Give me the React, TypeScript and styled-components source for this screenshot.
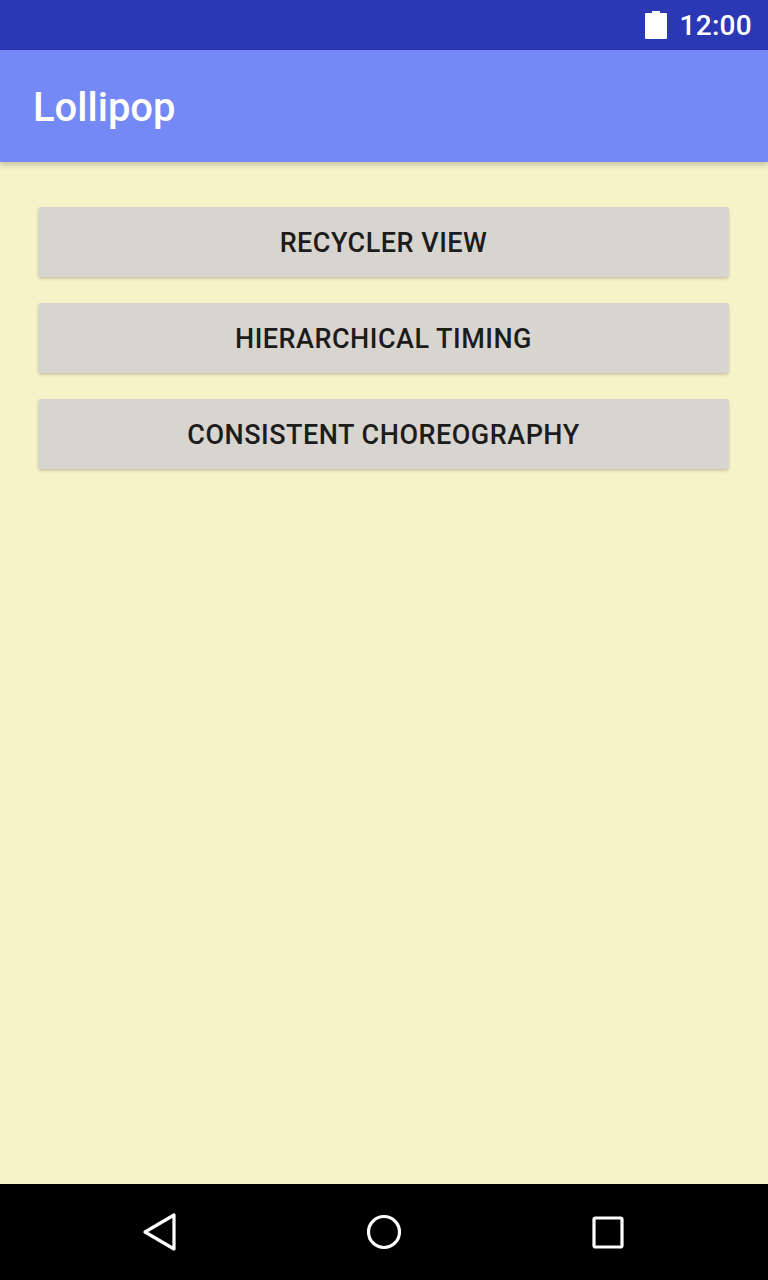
import styled, { createGlobalStyle } from 'styled-components';

const GlobalStyle = createGlobalStyle`
  html, body {
    margin: 0;
    padding: 0;
    background: #f7f3c9;
    font-family: Roboto, "Noto Sans", "Liberation Sans", sans-serif;
  }
`;

const Screen = styled.div`
  width: 768px;
  height: 1280px;
  display: flex;
  flex-direction: column;
  background: #f7f3c9;
`;

const StatusBar = styled.div`
  height: 50px;
  background: #2b38b4;
  display: flex;
  align-items: center;
  justify-content: flex-end;
  gap: 12px;
  padding-right: 16px;
  color: #ffffff;
`;

const Clock = styled.span`
  font-size: 28px;
  font-weight: 500;
  letter-spacing: 0.3px;
`;

const AppBar = styled.header`
  height: 112px;
  background: #7489f5;
  display: flex;
  align-items: center;
  padding-left: 33px;
  box-shadow: 0 3px 6px rgba(0, 0, 0, 0.2);
  position: relative;
  z-index: 1;
`;

const Title = styled.h1`
  margin: 0;
  margin-top: 2px;
  font-size: 40px;
  font-weight: 500;
  color: #ffffff;
`;

const Content = styled.main`
  flex: 1;
  display: flex;
  flex-direction: column;
  gap: 26px;
  padding: 45px 39px 0 38px;
`;

const ActionButton = styled.button`
  height: 70px;
  border: none;
  border-radius: 3px;
  background: #d8d5d0;
  box-shadow: 0 2px 3px rgba(0, 0, 0, 0.18);
  font-family: Roboto, "Noto Sans", "Liberation Sans", sans-serif;
  font-size: 27px;
  font-weight: 500;
  color: #1c1c1c;
  text-transform: uppercase;
  letter-spacing: 0.5px;
  padding-top: 3px;
  cursor: pointer;
`;

const NavBar = styled.nav`
  height: 96px;
  background: #000000;
  display: grid;
  grid-template-columns: 1fr 1fr 1fr;
  align-items: center;
  justify-items: center;
  padding: 0 48px;
`;

const NavIcon = styled.svg`
  width: 40px;
  height: 40px;
  fill: none;
  stroke: #ffffff;
  stroke-width: 3.2;
  stroke-linejoin: round;
`;

function BatteryIcon() {
  return (
    <svg width="22" height="28" viewBox="0 0 22 28">
      <rect x="7" y="0" width="8" height="3" fill="#ffffff" />
      <rect x="0" y="2" width="22" height="26" rx="1" fill="#ffffff" />
    </svg>
  );
}

const items = ['Recycler View', 'Hierarchical Timing', 'Consistent Choreography'];

export default function App() {
  return (
    <>
      <GlobalStyle />
      <Screen>
        <StatusBar>
          <BatteryIcon />
          <Clock>12:00</Clock>
        </StatusBar>
        <AppBar>
          <Title>Lollipop</Title>
        </AppBar>
        <Content>
          {items.map((label) => (
            <ActionButton key={label}>{label}</ActionButton>
          ))}
        </Content>
        <NavBar>
          <NavIcon viewBox="0 0 40 40">
            <path d="M34 3 L34 37 L5 20 Z" />
          </NavIcon>
          <NavIcon viewBox="0 0 40 40">
            <circle cx="20" cy="20" r="15.5" />
          </NavIcon>
          <NavIcon viewBox="0 0 40 40">
            <rect x="6" y="6" width="28" height="29" rx="1.5" />
          </NavIcon>
        </NavBar>
      </Screen>
    </>
  );
}
